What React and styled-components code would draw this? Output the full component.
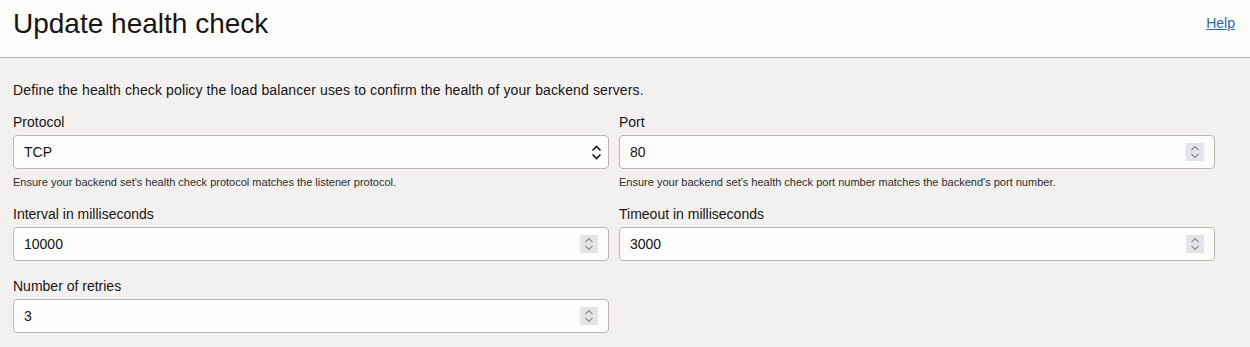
import styled, { createGlobalStyle } from "styled-components";

const GlobalStyle = createGlobalStyle`
  html, body {
    margin: 0;
    padding: 0;
    background: #f2f1f0;
    font-family: "Liberation Sans", Arial, sans-serif;
    color: #161513;
  }
`;

const Page = styled.div`
  width: 1250px;
  height: 347px;
  background: #f2f1f0;
  overflow: hidden;
`;

const Header = styled.header`
  height: 57px;
  box-sizing: content-box;
  border-bottom: 1px solid #b7b4b0;
  background: #fcfcfb;
  display: flex;
  justify-content: space-between;
  align-items: flex-start;
  padding: 0 15px 0 13px;
`;

const Title = styled.h1`
  margin: 8px 0 0;
  font-size: 28px;
  font-weight: 400;
  line-height: 32px;
`;

const HelpLink = styled.a`
  margin-top: 15px;
  font-size: 14px;
  line-height: 17px;
  color: #1f6bb0;
  text-decoration: underline;
`;

const Body = styled.div`
  padding: 24px 0 0 13px;
`;

const Intro = styled.p`
  margin: 0 0 15px;
  font-size: 14px;
  line-height: 17px;
  letter-spacing: 0.12px;
`;

const Grid = styled.div`
  display: grid;
  grid-template-columns: 596px 596px;
  column-gap: 10px;
  row-gap: 17px;
  align-items: start;
`;

const Field = styled.div`
  display: flex;
  flex-direction: column;
`;

const Label = styled.label`
  font-size: 14px;
  line-height: 17px;
  margin-bottom: 4px;
`;

const Box = styled.div`
  height: 34px;
  box-sizing: border-box;
  border: 1px solid #bbb6ae;
  border-radius: 4px;
  background: #fcfcfb;
  display: flex;
  align-items: center;
  justify-content: space-between;
  padding: 0 ${(p) => (p.$select ? "6px" : "10px")} 0 10px;
  font-size: 14px;
`;

const Value = styled.span`
  line-height: 17px;
`;

const Spin = styled.span`
  width: 18px;
  height: 18px;
  background: #e4e3e7;
  display: flex;
  align-items: center;
  justify-content: center;
`;

const Hint = styled.div`
  margin-top: 7px;
  font-size: 11px;
  line-height: 13px;
  color: #2e2b28;
`;

const SelectArrows = () => (
  <svg width="11" height="15" viewBox="0 0 11 15" fill="none">
    <path d="M1.5 5.5 L5.5 1.5 L9.5 5.5" stroke="#161513" strokeWidth="1.6" />
    <path d="M1.5 9.5 L5.5 13.5 L9.5 9.5" stroke="#161513" strokeWidth="1.6" />
  </svg>
);

const SpinArrows = () => (
  <svg width="10" height="14" viewBox="0 0 10 14" fill="none">
    <path d="M1.5 5 L5 1.5 L8.5 5" stroke="#8f8d93" strokeWidth="1.2" />
    <path d="M1.5 9 L5 12.5 L8.5 9" stroke="#8f8d93" strokeWidth="1.2" />
  </svg>
);

const NumberInput = ({ label, value, hint }) => (
  <Field>
    <Label>{label}</Label>
    <Box>
      <Value>{value}</Value>
      <Spin>
        <SpinArrows />
      </Spin>
    </Box>
    {hint && <Hint>{hint}</Hint>}
  </Field>
);

export default function App() {
  return (
    <Page>
      <GlobalStyle />
      <Header>
        <Title>Update health check</Title>
        <HelpLink href="#">Help</HelpLink>
      </Header>
      <Body>
        <Intro>
          Define the health check policy the load balancer uses to confirm the
          health of your backend servers.
        </Intro>
        <Grid>
          <Field>
            <Label>Protocol</Label>
            <Box $select>
              <Value>TCP</Value>
              <SelectArrows />
            </Box>
            <Hint>
              Ensure your backend set's health check protocol matches the
              listener protocol.
            </Hint>
          </Field>
          <NumberInput
            label="Port"
            value="80"
            hint="Ensure your backend set's health check port number matches the backend's port number."
          />
          <NumberInput label="Interval in milliseconds" value="10000" />
          <NumberInput label="Timeout in milliseconds" value="3000" />
          <NumberInput label="Number of retries" value="3" />
        </Grid>
      </Body>
    </Page>
  );
}
